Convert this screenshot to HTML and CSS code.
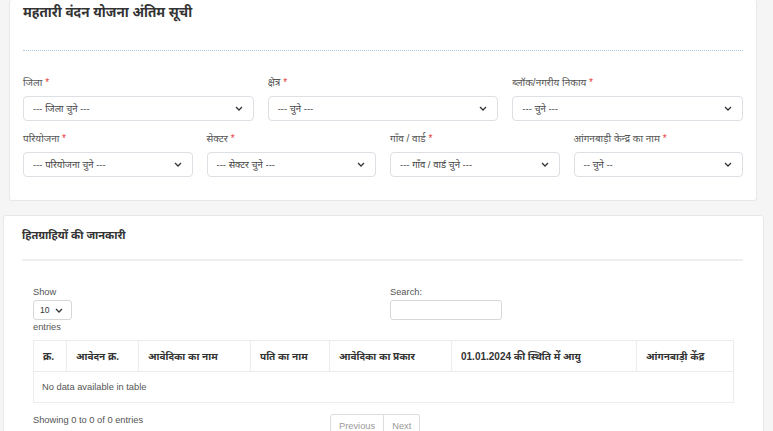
FILE: index.html
```html
<!DOCTYPE html>
<html lang="hi">
<head>
<meta charset="utf-8">
<title>महतारी वंदन योजना अंतिम सूची</title>
<link rel="stylesheet" href="styles.css">
</head>
<body>
<div class="card card-filter">
  <h1 class="card-title">महतारी वंदन योजना अंतिम सूची</h1>
  <div class="dotted-sep"></div>
  <div class="form-row cols-3">
    <div class="field">
      <label class="field-label">जिला <span class="req">*</span></label>
      <div class="select"><span>--- जिला चुने ---</span><svg class="chev" viewBox="0 0 8 5" width="8" height="5"><path d="M1 1l3 3 3-3"/></svg></div>
    </div>
    <div class="field">
      <label class="field-label">क्षेत्र <span class="req">*</span></label>
      <div class="select"><span>--- चुने ---</span><svg class="chev" viewBox="0 0 8 5" width="8" height="5"><path d="M1 1l3 3 3-3"/></svg></div>
    </div>
    <div class="field">
      <label class="field-label">ब्लॉक/नगरीय निकाय <span class="req">*</span></label>
      <div class="select"><span>--- चुने ---</span><svg class="chev" viewBox="0 0 8 5" width="8" height="5"><path d="M1 1l3 3 3-3"/></svg></div>
    </div>
  </div>
  <div class="form-row cols-4">
    <div class="field">
      <label class="field-label">परियोजना <span class="req">*</span></label>
      <div class="select"><span>--- परियोजना चुने ---</span><svg class="chev" viewBox="0 0 8 5" width="8" height="5"><path d="M1 1l3 3 3-3"/></svg></div>
    </div>
    <div class="field">
      <label class="field-label">सेक्टर <span class="req">*</span></label>
      <div class="select"><span>--- सेक्टर चुने ---</span><svg class="chev" viewBox="0 0 8 5" width="8" height="5"><path d="M1 1l3 3 3-3"/></svg></div>
    </div>
    <div class="field">
      <label class="field-label">गाँव / वार्ड <span class="req">*</span></label>
      <div class="select"><span>--- गाँव / वार्ड चुने ---</span><svg class="chev" viewBox="0 0 8 5" width="8" height="5"><path d="M1 1l3 3 3-3"/></svg></div>
    </div>
    <div class="field">
      <label class="field-label">आंगनबाड़ी केन्द्र का नाम <span class="req">*</span></label>
      <div class="select"><span>-- चुने --</span><svg class="chev" viewBox="0 0 8 5" width="8" height="5"><path d="M1 1l3 3 3-3"/></svg></div>
    </div>
  </div>
</div>

<div class="card card-list">
  <h2 class="list-title">हितग्राहियों की जानकारी</h2>
  <div class="solid-sep"></div>
  <div class="dt-wrap">
    <div class="dt-controls">
      <div class="dt-length">
        <div class="small-text">Show</div>
        <div class="len-select"><span>10</span><svg class="chev" viewBox="0 0 8 5" width="8" height="5"><path d="M1 1l3 3 3-3"/></svg></div>
        <div class="small-text">entries</div>
      </div>
      <div class="dt-search">
        <div class="small-text">Search:</div>
        <div class="search-input"></div>
      </div>
    </div>
    <table class="dt-table">
      <thead>
        <tr>
          <th class="c1">क्र.</th>
          <th class="c2">आवेदन क्र.</th>
          <th class="c3">आवेदिका का नाम</th>
          <th class="c4">पति का नाम</th>
          <th class="c5">आवेदिका का प्रकार</th>
          <th class="c6">01.01.2024 की स्थिति में आयु</th>
          <th class="c7">आंगनबाड़ी केंद्र</th>
        </tr>
      </thead>
      <tbody>
        <tr><td colspan="7" class="empty">No data available in table</td></tr>
      </tbody>
    </table>
    <div class="dt-footer">
      <div class="small-text info">Showing 0 to 0 of 0 entries</div>
      <div class="pager">
        <span class="page-btn">Previous</span><span class="page-btn">Next</span>
      </div>
    </div>
  </div>
</div>
</body>
</html>
```

FILE: styles.css
```css
* { box-sizing: border-box; }
html, body { margin: 0; padding: 0; }
body {
  background: #f5f5f5;
  font-family: "Liberation Sans", "Noto Sans", sans-serif;
  color: #333;
  width: 773px;
  height: 431px;
  overflow: hidden;
}
.card {
  background: #fff;
  border: 1px solid #e8e8e8;
  border-radius: 3px;
}
.card-filter {
  margin-left: 9px;
  width: 748px;
  border-top: none;
  padding: 3px 13px 23px 13px;
}
.card-title {
  margin: 0;
  font-size: 13.5px;
  line-height: 20px;
  font-weight: bold;
  color: #333;
}
.dotted-sep {
  margin-top: 27px;
  border-top: 1px dotted #a9cde0;
  height: 0;
}
.form-row {
  display: grid;
  column-gap: 14px;
}
.cols-3 { grid-template-columns: repeat(3, 1fr); margin-top: 25px; }
.cols-4 { grid-template-columns: repeat(4, 1fr); margin-top: 11px; }
.field-label {
  display: block;
  font-size: 10px;
  line-height: 14px;
  color: #555;
  margin-bottom: 6px;
}
.req { color: #e53935; }
.select {
  height: 25px;
  border: 1px solid #dcdfe3;
  border-radius: 4px;
  display: flex;
  align-items: center;
  justify-content: space-between;
  padding: 0 10px 0 9px;
  font-size: 9.5px;
  color: #444;
}
.chev { fill: none; stroke: #333; stroke-width: 1.3; }

.card-list {
  margin: 14px 0 0 3px;
  width: 761px;
  padding: 10px 20px 0 18px;
  height: 240px;
}
.list-title {
  margin: 0;
  font-size: 11px;
  line-height: 18px;
  font-weight: bold;
  color: #333;
}
.solid-sep {
  margin-top: 15px;
  border-top: 2px solid #eee;
}
.dt-wrap {
  padding: 0 10px 0 11px;
}
.dt-controls {
  display: grid;
  grid-template-columns: 357px 1fr;
  margin-top: 25px;
}
.small-text {
  font-size: 9.3px;
  line-height: 13px;
  color: #555;
}
.len-select {
  width: 39px;
  height: 20px;
  border: 1px solid #d8d8d8;
  border-radius: 3px;
  display: flex;
  align-items: center;
  gap: 6px;
  padding-left: 6px;
  margin: 1px 0 1px;
  font-size: 8.5px;
  color: #333;
}
.search-input {
  width: 112px;
  height: 20px;
  border: 1px solid #d8d8d8;
  border-radius: 3px;
  margin-top: 1px;
}
.dt-table {
  width: 700px;
  border-collapse: collapse;
  margin-top: 6px;
  table-layout: fixed;
}
.dt-table th, .dt-table td {
  border: 1px solid #ececec;
  text-align: left;
  padding: 0 9px;
  height: 31px;
}
.dt-table th {
  font-size: 10px;
  font-weight: bold;
  color: #333;
}
.dt-table .empty {
  font-size: 9.3px;
  color: #555;
  padding-left: 8px;
}
.c1 { width: 33px; }
.c2 { width: 72px; }
.c3 { width: 112px; }
.c4 { width: 79px; }
.c5 { width: 122px; }
.c6 { width: 185px; }
.c7 { width: 97px; }
.dt-footer {
  display: grid;
  grid-template-columns: 297px 1fr;
  margin-top: 11px;
  align-items: start;
}
.info { padding-top: 0; }
.pager { display: flex; }
.page-btn {
  font-size: 9.3px;
  color: #999;
  border: 1px solid #ddd;
  padding: 5px 8px;
  line-height: 13px;
}
.page-btn + .page-btn { border-left: none; }
.page-btn:first-child { border-radius: 3px 0 0 3px; }
.page-btn:last-child { border-radius: 0 3px 3px 0; }
```
